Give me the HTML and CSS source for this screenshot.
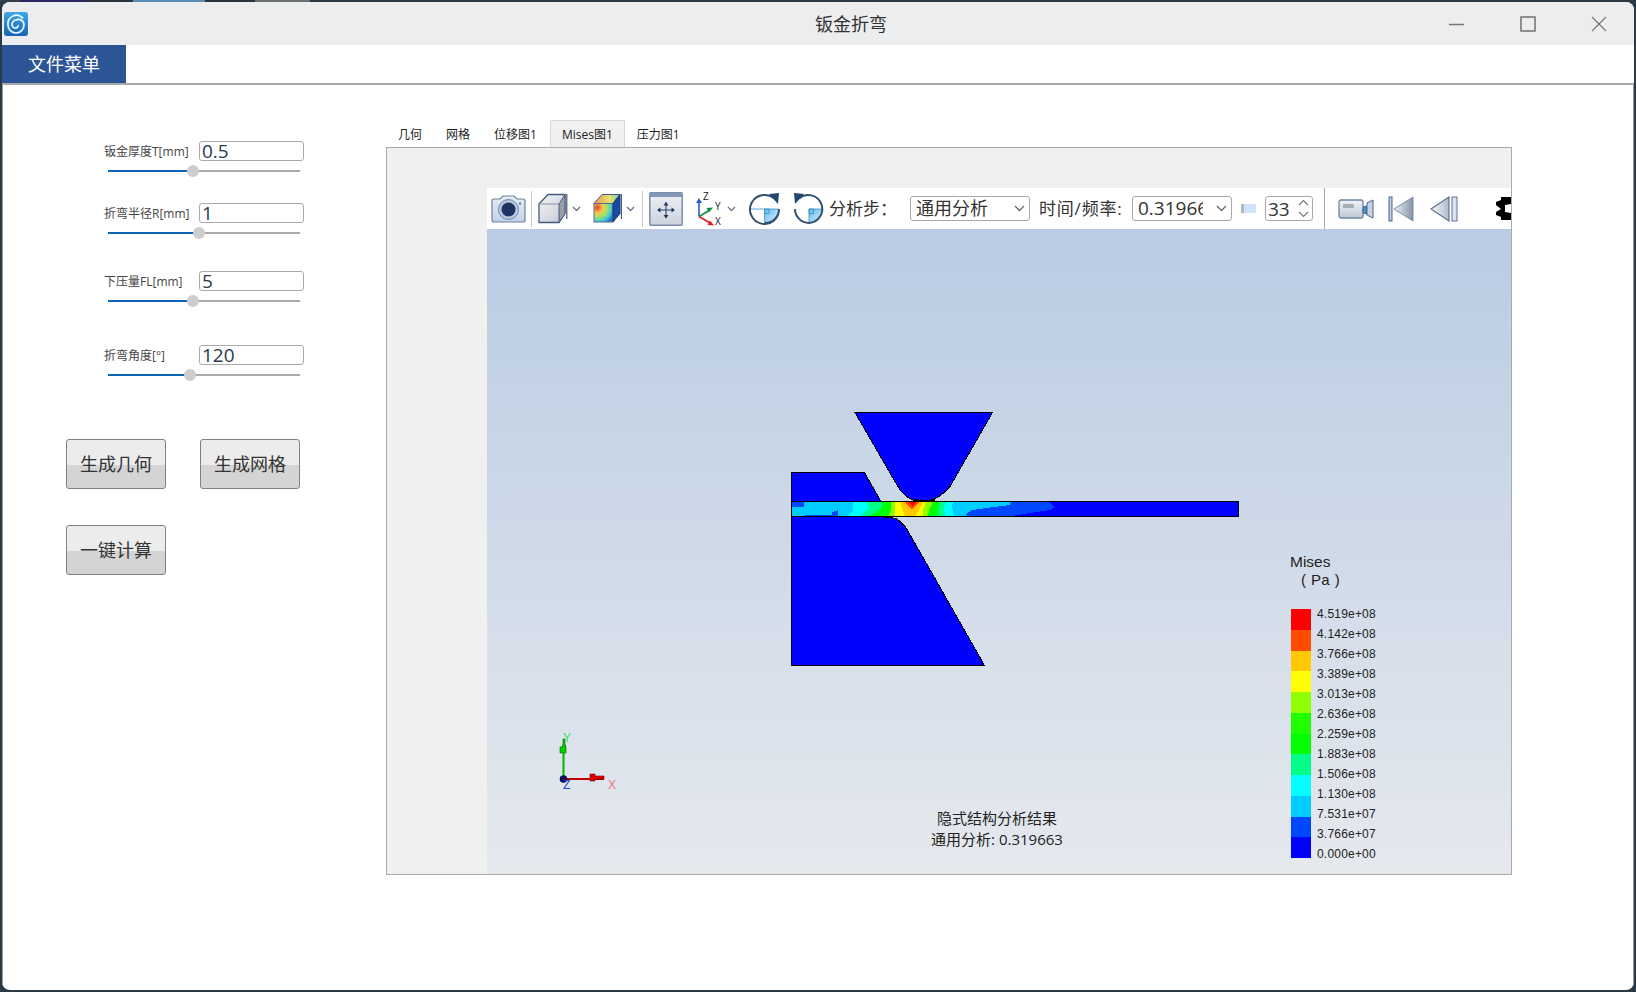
FILE: index.html
```html
<!DOCTYPE html>
<html lang="zh">
<head>
<meta charset="utf-8">
<title>钣金折弯</title>
<link rel="stylesheet" href="styles.css">
</head>
<body>
<div class="window">
  <header class="titlebar">
    <svg class="app-logo" viewBox="0 0 24 24">
      <defs><linearGradient id="lg" x1="0" y1="0" x2="0" y2="1"><stop offset="0" stop-color="#3ea6e6"/><stop offset="1" stop-color="#1465b4"/></linearGradient></defs>
      <rect width="24" height="24" rx="3" fill="url(#lg)"/>
      <path d="M19 6.500A8.500 8.500 0 0 0 4 13a8 8 0 0 0 8 8 8 8 0 0 0 8-8 5.500 5.500 0 0 0-8-5 4.500 4.500 0 0 0-4 5 3.500 3.500 0 0 0 4 3 2.500 2.500 0 0 0 2-3" fill="none" stroke="#eaf6fd" stroke-width="1.700"/>
    </svg>
    <div class="title">钣金折弯</div>
    <div class="winbtns">
      <svg class="winbtn" viewBox="0 0 16 16"><path d="M0 8.500h15" stroke="#777" stroke-width="1.400"/></svg>
      <svg class="winbtn" viewBox="0 0 16 16"><rect x="1" y="1" width="14" height="14" fill="none" stroke="#777" stroke-width="1.600"/></svg>
      <svg class="winbtn" viewBox="0 0 16 16"><path d="M1 1l14 14M15 1L1 15" stroke="#777" stroke-width="1.200"/></svg>
    </div>
  </header>
  <nav class="menubar"><div class="menu-btn">文件菜单</div></nav>
  <main class="content">
    <section class="form">
      <div class="group">
        <div class="field"><span class="label">钣金厚度T[mm]</span><div class="input">0.5</div></div>
        <div class="slider"><div class="fill" style="width:85px"></div></div>
      </div>
      <div class="group g2">
        <div class="field"><span class="label">折弯半径R[mm]</span><div class="input">1</div></div>
        <div class="slider"><div class="fill" style="width:91px"></div></div>
      </div>
      <div class="group g3">
        <div class="field"><span class="label">下压量FL[mm]</span><div class="input">5</div></div>
        <div class="slider"><div class="fill" style="width:85px"></div></div>
      </div>
      <div class="group g4">
        <div class="field"><span class="label">折弯角度[°]</span><div class="input">120</div></div>
        <div class="slider"><div class="fill" style="width:82px"></div></div>
      </div>
      <div class="actions">
        <div class="btn">生成几何</div>
        <div class="btn">生成网格</div>
        <div class="btn">一键计算</div>
      </div>
    </section>
    <section class="results">
      <div class="tabs">
        <div class="tab">几何</div>
        <div class="tab">网格</div>
        <div class="tab">位移图1</div>
        <div class="tab active">Mises图1</div>
        <div class="tab">压力图1</div>
      </div>
      <div class="panel">
        <div class="viewer">
          <div class="toolbar">
            <svg class="tb camera" viewBox="0 0 35 30">
              <defs><linearGradient id="cam" x1="0" y1="0" x2="0" y2="1"><stop offset="0" stop-color="#e6edf6"/><stop offset="1" stop-color="#c3d2e6"/></linearGradient></defs>
              <path d="M1 7q0-2 2-2h6l3-3h11l3 3h6q2 0 2 2v19q0 2-2 2H3q-2 0-2-2z" fill="url(#cam)" stroke="#6c80a0" stroke-width="1.200"/>
              <circle cx="17.500" cy="15.500" r="10" fill="#b9c8de" stroke="#6f86ad"/>
              <circle cx="17.500" cy="15.500" r="7" fill="#1c3563"/>
              <circle cx="29" cy="9.500" r="1.200" fill="#6c80a0"/>
            </svg>
            <i class="sep sep1"></i>
            <svg class="tb cube" viewBox="0 0 30 31">
              <defs><linearGradient id="cf" x1="0" y1="0" x2="1" y2="1"><stop offset="0" stop-color="#f4f5f8"/><stop offset="1" stop-color="#c4c8d0"/></linearGradient></defs>
              <path d="M1 11L10 1.500h17v19l-6 9H1z" fill="url(#cf)" stroke="#465a7e" stroke-width="1.300"/>
              <path d="M21 11L27 1.500v19l-6 9z" fill="#9a9ea6" stroke="#465a7e"/>
              <path d="M1 11h20" stroke="#8a96ac"/>
              <path d="M28.800 1v25" stroke="#465a7e" stroke-width="1.200"/>
            </svg>
            <svg class="tb chev" viewBox="0 0 9 6"><path d="M1 1l3.500 3.500L8 1" fill="none" stroke="#66768c" stroke-width="1.300"/></svg>
            <svg class="tb ccube" viewBox="0 0 29 31">
              <defs>
                <radialGradient id="hm" cx=".18" cy=".22" r=".95"><stop offset="0" stop-color="#e0402c"/><stop offset=".3" stop-color="#f6c84a"/><stop offset=".55" stop-color="#a4e06a"/><stop offset=".8" stop-color="#3dc8d8"/><stop offset="1" stop-color="#2a70c8"/></radialGradient>
                <linearGradient id="tp" x1="0" y1="0" x2="1" y2="0"><stop offset="0" stop-color="#f09850"/><stop offset=".6" stop-color="#e8e070"/><stop offset="1" stop-color="#70d0a0"/></linearGradient>
              </defs>
              <path d="M1 10.500L9 1.500h18l-7 9z" fill="url(#tp)" stroke="#3c5890"/>
              <rect x="1" y="10.500" width="19" height="18.500" fill="url(#hm)" stroke="#5a6c90"/>
              <path d="M20 10.500L27 1.500v19l-7 8.500z" fill="#1a4aa0" stroke="#1a3a70"/>
              <path d="M28.500 1v25" stroke="#3c5890" stroke-width="1.200"/>
            </svg>
            <svg class="tb chev ch2" viewBox="0 0 9 6"><path d="M1 1l3.500 3.500L8 1" fill="none" stroke="#66768c" stroke-width="1.300"/></svg>
            <i class="sep sep2"></i>
            <svg class="tb fit" viewBox="0 0 34 34">
              <defs><linearGradient id="ft" x1="0" y1="0" x2="0" y2="1"><stop offset="0" stop-color="#eef0f4"/><stop offset="1" stop-color="#ccd3de"/></linearGradient></defs>
              <rect x=".8" y=".8" width="32.400" height="32.400" rx="1" fill="url(#ft)" stroke="#7a8cab" stroke-width="1.500"/>
              <rect x="1" y="1" width="32" height="4" fill="#8296b6"/>
              <path d="M17 10v16M9 18h16" stroke="#2c466e" stroke-width="1.100"/>
              <path d="M17 10l-2.500 3.500h5zM17 26.500l-2.500-3.500h5zM8 18l3.500-2.500v5zM26 18l-3.500-2.500v5z" fill="#1e3a66"/>
            </svg>
            <svg class="tb triad" viewBox="0 0 30 36">
              <path d="M4 25.500V9" stroke="#2060c0" stroke-width="1.600"/><path d="M4 7L1 12h6z" fill="#2060c0"/>
              <path d="M4 25.500L15 19" stroke="#109040" stroke-width="1.600"/><path d="M18 16.500l-6.500.5 2.500 4.500z" fill="#109040"/>
              <path d="M4 25.500l12 7" stroke="#e02020" stroke-width="1.600"/><path d="M19 34.500l-6.500-.5 2.500-4.500z" fill="#e02020"/>
              <text class="axis-tb" x="8" y="9">Z</text><text class="axis-tb" x="20" y="19">Y</text><text class="axis-tb" x="20" y="34">X</text>
            </svg>
            <svg class="tb chev ch3" viewBox="0 0 9 6"><path d="M1 1l3.500 3.500L8 1" fill="none" stroke="#66768c" stroke-width="1.300"/></svg>
            <svg class="tb rot" viewBox="0 0 33 33">
              <defs><linearGradient id="rq" x1="0" y1="0" x2="1" y2="1"><stop offset="0" stop-color="#5fb8ec"/><stop offset="1" stop-color="#e4f3fc"/></linearGradient></defs>
              <path d="M16.500 17h14a14 14 0 0 1-14 14z" fill="url(#rq)"/>
              <path d="M16.500 17h4.500v4.500h-4.500zM16.500 17v14M2 17h28.500" fill="none" stroke="#3a90c8" stroke-width=".8"/>
              <path d="M26 6.500A14.500 14.500 0 1 0 31 17a14 14 0 0 1-14 14" fill="none" stroke="#33506f" stroke-width="2"/>
              <path d="M21 2l10-1-1 11z" fill="#24456c"/>
            </svg>
            <svg class="tb rot rot2" viewBox="0 0 31 33">
              <path d="M16 17h14a14 14 0 0 1-14 14z" fill="url(#rq)"/>
              <path d="M16 17h4.500v4.500H16zM16 17v14M16 17h14" fill="none" stroke="#3a90c8" stroke-width=".8"/>
              <path d="M6 6.500A14 14 0 1 1 16 31 14 14 0 0 1 2 17" fill="none" stroke="#33506f" stroke-width="2"/>
              <path d="M11 2L1 1l1 11z" fill="#24456c"/>
            </svg>
            <span class="tb-label step-label">分析步：</span>
            <div class="combo combo-step"><span class="combo-text">通用分析</span><svg class="combo-arrow" viewBox="0 0 11 7"><path d="M1 1l4.500 4.500L10 1" fill="none" stroke="#667" stroke-width="1.300"/></svg></div>
            <span class="tb-label time-label">时间/频率:</span>
            <div class="combo combo-time"><span class="combo-text clip">0.319663</span><svg class="combo-arrow" viewBox="0 0 11 7"><path d="M1 1l4.500 4.500L10 1" fill="none" stroke="#667" stroke-width="1.300"/></svg></div>
            <div class="mini-slider"></div>
            <div class="spin"><span>33</span><svg class="spin-arrows" viewBox="0 0 11 19"><path d="M1 6l4.500-4.500L10 6M1 13l4.500 4.500L10 13" fill="none" stroke="#778" stroke-width="1.200"/></svg></div>
            <i class="sep sep3"></i>
            <svg class="tb video" viewBox="0 0 36 20">
              <defs><linearGradient id="vd" x1="0" y1="0" x2="0" y2="1"><stop offset="0" stop-color="#f0f2f6"/><stop offset="1" stop-color="#c0c8d4"/></linearGradient></defs>
              <rect x="1" y="1" width="24" height="18" rx="2" fill="url(#vd)" stroke="#6e82a4" stroke-width="1.300"/>
              <rect x="5" y="5" width="11" height="4" fill="#a8adb6"/>
              <path d="M25 8l4-1v8l-4-1z" fill="#4c8cc0" stroke="#47648e"/>
              <path d="M29 4l6-3v18l-6-3z" fill="#c8d4e4" stroke="#47648e"/>
            </svg>
            <svg class="tb first" viewBox="0 0 26 26">
              <defs><linearGradient id="tri" x1="0" y1="0" x2="1" y2="0"><stop offset="0" stop-color="#eef1f5"/><stop offset="1" stop-color="#8494a8"/></linearGradient></defs>
              <rect x="1" y="1" width="3" height="24" fill="#c4d0e0" stroke="#47648e"/>
              <path d="M6 13L25 1v24z" fill="url(#tri)" stroke="#7a8ca8"/>
            </svg>
            <svg class="tb prev" viewBox="0 0 28 26">
              <defs><linearGradient id="tri2" x1="0" y1="0" x2="1" y2="0"><stop offset="0" stop-color="#fafbfc"/><stop offset="1" stop-color="#b0bac8"/></linearGradient></defs>
              <path d="M1 13L19 1v24z" fill="url(#tri2)" stroke="#5c7494" stroke-width="1.200"/>
              <rect x="22" y="1" width="5" height="24" fill="#dde3ec" stroke="#5c7494"/>
            </svg>
            <svg class="tb clipped" viewBox="0 0 15 23"><path d="M0 5L5 3V0H15V7L9 8V15L15 16V23H5V20L0 18V15L5 12 0 8z" fill="#000"/></svg>
          </div>
          <div class="view">
            <svg class="scene" viewBox="487 229 1024 645">
              <g class="solid">
                <path d="M855 412.500H992.500L950 486.500Q944 494 933 500H913Q903 496 897 485z" fill="#0000ff" stroke="#000"/>
                <path d="M791.500 472.500H864.500L881 501.500H791.500z" fill="#0000ff" stroke="#000"/>
                <path d="M791.500 516.500H883L896 518.500Q902 522 906.500 528.500L984.500 665.500H791.500z" fill="#0000ff" stroke="#000"/>
                <rect x="791.500" y="501.500" width="447" height="15" fill="#0000ff"/>
                <path d="M792 502H1049L1055 507L1050 510L1030 513L1012 516H792z" fill="#0048ff"/>
                <path d="M804 502H1011L1010 505L990 507.500L972 510L966 514L967 516H838V510L832 512V515H818L792 516V507H804z" fill="#00ccff"/>
                <path d="M853 502H953L952 507L954 516H848L853 510z" fill="#00ffff"/>
                <path d="M867 502H946L944 508L945 516H860L864 512L870 508z" fill="#00ff88"/>
                <path d="M882 502H939L938 516H870L878 511L882 507z" fill="#00ff00"/>
                <path d="M891 502H933L929 510L928 516H888L891 510z" fill="#90ff00"/>
                <path d="M895 502H926L923 510L923 516H895z" fill="#ffff00"/>
                <path d="M900 502H923L919 510L915 516H905L903 510z" fill="#ffc800"/>
                <path d="M904 502H919L912 510z" fill="#ff4c00"/>
                <path d="M908 502H916L912 506z" fill="#ff0000"/>
                <rect x="791.500" y="501.500" width="447" height="15" fill="none" stroke="#000"/>
                <path d="M914 500h5M930 500h5M884 517h5" stroke="#000" stroke-width="2"/>
              </g>
              <g class="triad-3d">
                <path d="M563.500 779V745" stroke="#00b400" stroke-width="2"/>
                <path d="M560 753h6v-6l-1-3v-5h-2v5l-1 3h-2z" fill="#00d000" stroke="#006000" stroke-width=".6"/>
                <path d="M564 779h40" stroke="#c00000" stroke-width="2"/>
                <path d="M590 774h5v2h9v3h-9v2h-5z" fill="#e00000" stroke="#700000" stroke-width=".6"/>
                <circle cx="563.500" cy="779" r="3.800" fill="#0a0a50"/>
                <text class="ax ax-y" x="563" y="742">Y</text>
                <text class="ax ax-x" x="608" y="789">X</text>
                <text class="ax ax-z" x="563" y="789">Z</text>
              </g>
            </svg>
            <div class="caption">
              <div>隐式结构分析结果</div>
              <div>通用分析: 0.319663</div>
            </div>
            <div class="legend">
              <div class="legend-title">Mises</div>
              <div class="legend-unit">( Pa )</div>
              <div class="legend-body">
                <div class="swatches">
                  <i class="c1"></i><i class="c2"></i><i class="c3"></i><i class="c4"></i><i class="c5"></i><i class="c6"></i><i class="c7"></i><i class="c8"></i><i class="c9"></i><i class="c10"></i><i class="c11"></i><i class="c12"></i>
                </div>
                <div class="ticks">
                  <span>4.519e+08</span><span>4.142e+08</span><span>3.766e+08</span><span>3.389e+08</span><span>3.013e+08</span><span>2.636e+08</span><span>2.259e+08</span><span>1.883e+08</span><span>1.506e+08</span><span>1.130e+08</span><span>7.531e+07</span><span>3.766e+07</span><span>0.000e+00</span>
                </div>
              </div>
            </div>
          </div>
        </div>
      </div>
    </section>
  </main>
</div>
</body>
</html>
```
FILE: styles.css
```css
* { box-sizing: border-box; }
html, body { height: 100%; }
body {
  margin: 0;
  padding: 2px;
  overflow: hidden;
  font-family: "Open Sans", "Noto Sans CJK SC", sans-serif;
  color: #333;
  background: linear-gradient(90deg, #33404a 0 20px, #2a2560 20px 88px, #2b3540 88px 133px, #5a8db5 133px 205px, #2b3540 205px 255px, #6a7070 255px 310px, #2b3945 310px) top / 100% 2px no-repeat, #2b3945;
}
.window {
  width: 1632px;
  height: 988px;
  display: flex;
  flex-direction: column;
  background: #fff;
  border-radius: 8px;
  overflow: hidden;
}

/* title bar */
.titlebar {
  flex: none;
  height: 43px;
  display: flex;
  align-items: center;
  background: #ebedef;
}
.app-logo { width: 24px; height: 24px; margin: 1px 0 0 2px; }
.title { margin-left: 787px; font-size: 18px; line-height: 24px; color: #333; }
.winbtns { margin-left: auto; margin-right: -28px; display: flex; }
.winbtn { width: 16px; height: 16px; margin-right: 55px; flex: none; }

/* menu */
.menubar { flex: none; height: 40px; border-bottom: 2px solid #a9a9a9; display: flex; }
.menu-btn {
  width: 124px;
  height: 38px;
  background: #2c5597;
  color: #fff;
  font-size: 18px;
  line-height: 38px;
  text-align: center;
}

/* layout */
.content {
  flex: 1;
  display: flex;
  border-left: 1px solid #999;
  border-right: 1px solid #999;
}
.form { width: 383px; flex: none; padding-top: 56px; }
.group { height: 36px; }
.g2 { margin-top: 26px; }
.g3 { margin-top: 32px; }
.g4 { margin-top: 38px; }
.field { display: flex; align-items: center; height: 20px; padding-left: 101px; }
.label { width: 95px; font-size: 12px; color: #444; white-space: nowrap; }
.input {
  width: 105px;
  height: 20px;
  border: 1px solid #aaa;
  border-radius: 3px;
  padding-left: 2px;
  font-size: 19px;
  line-height: 19px;
  color: #2c3850;
  background: #fff;
}
.slider {
  position: relative;
  width: 192px;
  height: 2px;
  margin: 9px 0 0 105px;
  background: #aaa;
}
.fill { position: relative; height: 100%; background: #0a64b8; }
.fill::after {
  content: "";
  position: absolute;
  right: -6px;
  top: -5px;
  width: 12px;
  height: 12px;
  border-radius: 50%;
  background: #cdcdcd;
}
.actions {
  display: grid;
  grid-template-columns: 100px 100px;
  column-gap: 34px;
  row-gap: 36px;
  margin: 58px 0 0 63px;
}
.btn {
  height: 50px;
  border: 1px solid #808080;
  border-radius: 3px;
  background: linear-gradient(#ececec 0 52%, #d4d4d4 52%);
  font-size: 18px;
  line-height: 48px;
  text-align: center;
  color: #333;
}

/* tabs */
.results { flex: none; width: 1126px; padding-top: 35px; }
.tabs { display: flex; height: 27px; }
.tab {
  padding: 0 11px;
  font-size: 12px;
  line-height: 27px;
  color: #222;
  border: 1px solid transparent;
  border-bottom: 0;
}
.tab.active { margin-left: 1px; background: #f0f0f0; border-color: #d8d8d8; }
.panel {
  height: 728px;
  border: 1px solid #aaa;
  background: #f0f0f0;
  padding: 40px 0 0 100px;
}
.viewer { height: 686px; display: flex; flex-direction: column; }

/* toolbar */
.toolbar {
  flex: none;
  height: 41px;
  background: #fff;
  display: flex;
  align-items: center;
  overflow: hidden;
  white-space: nowrap;
}
.tb { flex: none; display: block; }
.sep { flex: none; width: 1px; height: 36px; background: #c8c8c8; }
.camera { width: 35px; height: 30px; margin-left: 4px; }
.sep1 { margin-left: 5px; }
.cube { width: 30px; height: 31px; margin-left: 6px; }
.chev { width: 9px; height: 6px; margin-left: 4px; }
.ccube { width: 29px; height: 31px; margin-left: 12px; }
.sep2 { margin-left: 7px; }
.fit { width: 34px; height: 34px; margin-left: 6px; }
.triad { width: 30px; height: 36px; margin-left: 12px; overflow: visible; }
.ch3 { margin-left: 2px; }
.axis-tb { font: 10px "Open Sans", sans-serif; fill: #222; }
.rot { width: 33px; height: 33px; margin-left: 12px; }
.rot2 { width: 31px; }
.tb-label { flex: none; font-size: 17px; line-height: 24px; color: #333; }
.step-label { width: 81px; margin-left: 5px; }
.time-label { width: 84px; margin-left: 9px; letter-spacing: .8px; }
.combo {
  flex: none;
  height: 25px;
  border: 1px solid #aaa;
  border-radius: 3px;
  display: flex;
  align-items: center;
  padding-left: 5px;
  font-size: 18px;
  color: #333;
  background: #fff;
}
.combo-step { width: 120px; }
.combo-time { width: 100px; margin-left: 9px; }
.combo-text { flex: 1; line-height: 23px; }
.combo-text.clip { flex: none; width: 65px; overflow: hidden; font-size: 19px; }
.combo-arrow { width: 11px; height: 7px; margin: 0 4px 0 auto; flex: none; }
.mini-slider {
  flex: none;
  width: 15px;
  height: 9px;
  margin-left: 9px;
  background: linear-gradient(90deg, #b0b8c0 0 3px, #cfe2fb 3px);
}
.spin {
  flex: none;
  width: 48px;
  height: 25px;
  margin-left: 9px;
  border: 1px solid #aaa;
  border-radius: 3px;
  display: flex;
  align-items: center;
  padding-left: 2px;
  font-size: 19px;
  color: #333;
}
.spin-arrows { width: 11px; height: 19px; margin-left: auto; margin-right: 3px; }
.sep3 { height: 41px; margin-left: 11px; background: #aaa; }
.video { width: 36px; height: 20px; margin-left: 13px; }
.first { width: 26px; height: 26px; margin-left: 14px; }
.prev { width: 28px; height: 26px; margin-left: 16px; }
.clipped { width: 15px; height: 23px; margin-left: 38px; }

/* 3D view */
.view {
  position: relative;
  flex: 1;
  overflow: hidden;
  background: linear-gradient(#b9cce3, #e6e9ee);
}
.scene { display: block; width: 1024px; height: 645px; }
.solid { shape-rendering: crispEdges; }
.ax { font: 12px "Liberation Sans", sans-serif; }
.ax-y { fill: #40e060; }
.ax-x { fill: #f07080; }
.ax-z { fill: #2040e0; }
.caption {
  position: absolute;
  left: 435px;
  top: 579px;
  width: 150px;
  font-size: 15px;
  line-height: 21px;
  text-align: center;
  color: #222;
}
.legend {
  position: absolute;
  left: 804px;
  top: 324px;
  color: #222;
  font-family: "Liberation Sans", "Noto Sans CJK SC", sans-serif;
}
.legend-title { font-size: 15.500px; line-height: 18px; margin-left: -1px; }
.legend-unit { font-size: 15px; line-height: 18px; padding-left: 10px; letter-spacing: .4px; white-space: pre; }
.legend-body { display: flex; margin-top: 20px; }
.swatches { width: 20px; height: 249px; display: flex; flex-direction: column; }
.swatches i { flex: 1; display: block; }
.c1 { background: #ff0000; }
.c2 { background: #ff4c00; }
.c3 { background: #ffc800; }
.c4 { background: #ffff00; }
.c5 { background: #90ff00; }
.c6 { background: #20ff00; }
.c7 { background: #00ff00; }
.c8 { background: #00ff88; }
.c9 { background: #00ffff; }
.c10 { background: #00ccff; }
.c11 { background: #0048ff; }
.c12 { background: #0000ff; }
.ticks {
  margin-left: 6px;
  display: flex;
  flex-direction: column;
  font-size: 12px;
  line-height: 20px;
  letter-spacing: .2px;
  margin-top: -5px;
}
```
